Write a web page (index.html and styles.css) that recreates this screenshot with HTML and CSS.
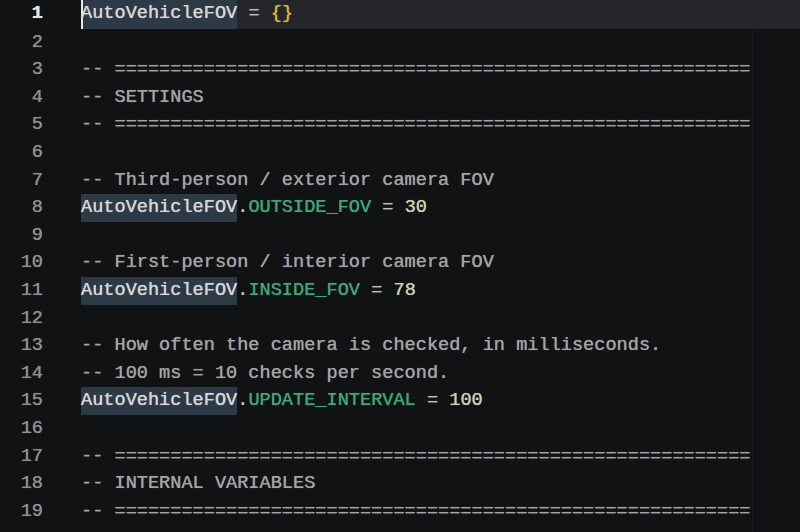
FILE: index.html
```html
<!DOCTYPE html>
<html>
<head>
<meta charset="utf-8">
<link rel="stylesheet" href="styles.css">
</head>
<body>
<div class="editor">
  <div class="line current"><span class="ln">1</span><span class="code"><span class="sel cur">AutoVehicleFOV</span> <span class="op">=</span> <span class="br">{}</span></span></div>
  <div class="line"><span class="ln">2</span><span class="code"></span></div>
  <div class="line"><span class="ln">3</span><span class="code cm">-- =========================================================</span></div>
  <div class="line"><span class="ln">4</span><span class="code cm">-- SETTINGS</span></div>
  <div class="line"><span class="ln">5</span><span class="code cm">-- =========================================================</span></div>
  <div class="line"><span class="ln">6</span><span class="code"></span></div>
  <div class="line"><span class="ln">7</span><span class="code cm">-- Third-person / exterior camera FOV</span></div>
  <div class="line"><span class="ln">8</span><span class="code"><span class="sel">AutoVehicleFOV</span><span class="op">.</span><span class="prop">OUTSIDE_FOV</span> <span class="op">=</span> <span class="num">30</span></span></div>
  <div class="line"><span class="ln">9</span><span class="code"></span></div>
  <div class="line"><span class="ln">10</span><span class="code cm">-- First-person / interior camera FOV</span></div>
  <div class="line"><span class="ln">11</span><span class="code"><span class="sel">AutoVehicleFOV</span><span class="op">.</span><span class="prop">INSIDE_FOV</span> <span class="op">=</span> <span class="num">78</span></span></div>
  <div class="line"><span class="ln">12</span><span class="code"></span></div>
  <div class="line"><span class="ln">13</span><span class="code cm">-- How often the camera is checked, in milliseconds.</span></div>
  <div class="line"><span class="ln">14</span><span class="code cm">-- 100 ms = 10 checks per second.</span></div>
  <div class="line"><span class="ln">15</span><span class="code"><span class="sel">AutoVehicleFOV</span><span class="op">.</span><span class="prop">UPDATE_INTERVAL</span> <span class="op">=</span> <span class="num">100</span></span></div>
  <div class="line"><span class="ln">16</span><span class="code"></span></div>
  <div class="line"><span class="ln">17</span><span class="code cm">-- =========================================================</span></div>
  <div class="line"><span class="ln">18</span><span class="code cm">-- INTERNAL VARIABLES</span></div>
  <div class="line"><span class="ln">19</span><span class="code cm">-- =========================================================</span></div>
</div>
</body>
</html>
```
FILE: styles.css
```css
html, body {
  margin: 0;
  padding: 0;
  background: #111214;
  overflow: hidden;
  height: 100%;
}
.editor {
  display: flex;
  flex-direction: column;
  padding-top: 1px;
  font-family: "Liberation Mono", "DejaVu Sans Mono", monospace;
  font-size: 18.6px;
  color: #d0d0d0;
  text-shadow: 0 0 0.7px currentColor;
  background: linear-gradient(to right, transparent 752px, #1a1b1e 752px, #1a1b1e 753px, transparent 753px);
  min-height: 100%;
  box-sizing: border-box;
}
.line {
  display: flex;
  height: 27.6px;
  line-height: 28.6px;
  white-space: pre;
}
.ln {
  width: 43px;
  flex: none;
  text-align: right;
  color: #8f8f8f;
  margin-right: 38px;
}
.code {
  flex: 1;
}
.current {
  margin-top: -1px;
  height: 28.6px;
}
.current .ln {
  color: #e6e6e6;
  font-weight: bold;
}
.current .code {
  background: #252629;
}
.cm {
  color: #a3a3a3;
}
.sel {
  background: #2b3a45;
  display: inline-block;
  height: 27.6px;
  color: #d6d6d6;
}
.current .sel {
  height: 28.6px;
}
.cur {
  box-shadow: inset 2px 0 0 #e8e8e8;
}
.op {
  color: #bdbdbd;
}
.br {
  color: #d6b93a;
}
.prop {
  color: #3fa675;
}
.num {
  color: #c9d2b0;
}
```
